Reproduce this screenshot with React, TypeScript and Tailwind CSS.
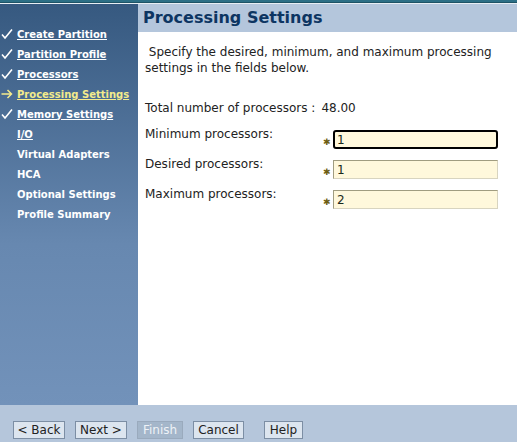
import React from 'react';

const steps = [
  { label: 'Create Partition', state: 'done' },
  { label: 'Partition Profile', state: 'done' },
  { label: 'Processors', state: 'done' },
  { label: 'Processing Settings', state: 'current' },
  { label: 'Memory Settings', state: 'done' },
  { label: 'I/O', state: 'link' },
  { label: 'Virtual Adapters', state: 'todo' },
  { label: 'HCA', state: 'todo' },
  { label: 'Optional Settings', state: 'todo' },
  { label: 'Profile Summary', state: 'todo' },
];

function Check() {
  return (
    <svg width="12" height="12" viewBox="0 0 12 12" className="shrink-0">
      <path d="M1 6.5 L4 10 L11 1.5" fill="none" stroke="white" strokeWidth="1.6" />
    </svg>
  );
}

function Arrow() {
  return (
    <svg width="12" height="12" viewBox="0 0 12 12" className="shrink-0">
      <path d="M0.5 6 H10.5 M6.5 2 L10.5 6 L6.5 10" fill="none" stroke="#f3eb8c" strokeWidth="1.5" />
    </svg>
  );
}

function Field({ label, value, focused }: { label: string; value: string; focused?: boolean }) {
  return (
    <div className="flex items-start h-[30px]">
      <span className="w-[178px]">{label}</span>
      <span className="w-[10px] mt-[12px] text-[9px] leading-none text-[#6e5e12]">✱</span>
      <input
        readOnly
        value={value}
        className={
          focused
            ? 'mt-[4px] w-[165px] h-[19px] bg-[#fff8dc] border-2 border-black rounded-[3px] px-[2px] text-[12px] text-[#1a2a1a] outline-none'
            : 'mt-[4px] w-[165px] h-[19px] bg-[#fff8dc] border border-t-[#a09c80] border-l-[#a09c80] border-r-[#d8d4c0] border-b-[#d8d4c0] px-[3px] text-[12px] text-[#1a2a1a] outline-none'
        }
      />
    </div>
  );
}

function Btn({ children, disabled, className = '' }: { children: React.ReactNode; disabled?: boolean; className?: string }) {
  return (
    <button
      className={
        (disabled
          ? 'bg-[#a4b6ca] text-[#eef2f7] border-[#9aaabd]'
          : 'bg-[#dce5ef] text-[#222] border-[#7c8ea4]') +
        ' h-[18px] border px-0 text-[12px] leading-none whitespace-nowrap ' +
        className
      }
    >
      {children}
    </button>
  );
}

export default function App() {
  return (
    <div className="w-[517px] h-[442px] flex flex-col bg-white overflow-hidden" style={{ fontFamily: '"DejaVu Sans", Verdana, sans-serif' }}>
      <div className="h-[3px] shrink-0 bg-[#2c6f86] border-b border-[#1d5366]" />
      <div className="h-[1px] shrink-0 bg-[#e8eef4]" />
      <div className="flex flex-1 min-h-0">
        <div className="w-[138px] shrink-0 bg-gradient-to-b from-[#365980] via-[#6788b0] via-60% to-[#7292ba] pt-[20px]">
          {steps.map((s) => (
            <div key={s.label} className="flex items-center h-[20px] pl-[1px] gap-[4px]">
              <span className="w-[12px] flex justify-center">
                {s.state === 'done' && <Check />}
                {s.state === 'current' && <Arrow />}
              </span>
              <span
                className={
                  'text-[10px] font-bold whitespace-nowrap ' +
                  (s.state === 'current'
                    ? 'text-[#f3eb8c] underline'
                    : s.state === 'todo'
                    ? 'text-white'
                    : 'text-white underline')
                }
              >
                {s.label}
              </span>
            </div>
          ))}
        </div>
        <div className="flex-1 flex flex-col">
          <div className="h-[28px] bg-[#b4c6dc] pl-[5px] flex items-center">
            <h1 className="text-[16px] font-bold text-[#0d3562] leading-none">Processing Settings</h1>
          </div>
          <div className="pl-[7px] text-[12px] text-[#222] leading-[16px]">
            <p className="mt-[12px] w-[360px]">&nbsp;Specify the desired, minimum, and maximum processing settings in the fields below.</p>
            <div className="mt-[24px] flex h-[26px]">
              <span>Total number of processors :</span>
              <span className="ml-[6px]">48.00</span>
            </div>
            <Field label="Minimum processors:" value="1" focused />
            <Field label="Desired processors:" value="1" />
            <Field label="Maximum processors:" value="2" />
          </div>
        </div>
      </div>
      <div className="h-[37px] shrink-0 bg-[#b5c6db] flex items-end pb-[3px] pl-[13px]">
        <Btn className="w-[52px]">&lt; Back</Btn>
        <Btn className="w-[52px] ml-[10px]">Next &gt;</Btn>
        <Btn disabled className="w-[46px] ml-[10px]">Finish</Btn>
        <Btn className="w-[51px] ml-[10px]">Cancel</Btn>
        <Btn className="w-[39px] ml-[20px]">Help</Btn>
      </div>
    </div>
  );
}
